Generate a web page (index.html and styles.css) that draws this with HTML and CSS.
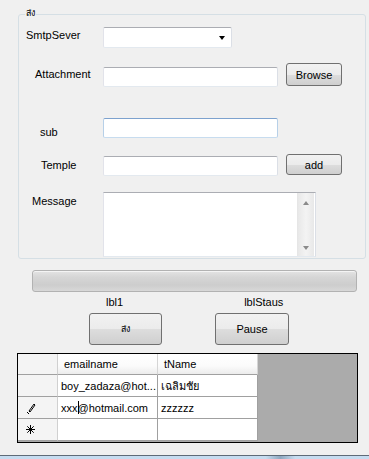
FILE: index.html
```html
<html>
    <head>
        <title>Send mail</title>
        <link rel="stylesheet" href="styles.css">
    </head>
    <body>
        <div class="window">
            <div class="group">
                <span class="group-title">ส่ง</span>
                <div class="row row-smtp">
                    <div class="label-col"><span class="lbl lbl-smtp">SmtpSever</span></div>
                    <div class="combo"><span class="combo-arrow"></span></div>
                </div>
                <div class="row row-attach">
                    <div class="label-col"><span class="lbl lbl-attach">Attachment</span></div>
                    <div class="textbox textbox-attach"></div>
                    <button class="btn btn-side">Browse</button>
                </div>
                <div class="row row-sub">
                    <div class="label-col"><span class="lbl lbl-sub">sub</span></div>
                    <div class="textbox focused"></div>
                </div>
                <div class="row row-temple">
                    <div class="label-col"><span class="lbl lbl-temple">Temple</span></div>
                    <div class="textbox textbox-temple"></div>
                    <button class="btn btn-side btn-add">add</button>
                </div>
                <div class="row row-msg">
                    <div class="label-col"><span class="lbl lbl-msg">Message</span></div>
                    <div class="memo">
                        <div class="memo-text"></div>
                        <div class="vscroll">
                            <span class="arrow-up"></span>
                            <span class="arrow-down"></span>
                        </div>
                    </div>
                </div>
            </div>

            <div class="progress"></div>

            <div class="status-row">
                <span class="lbl1">lbl1</span>
                <span class="lblstatus">lblStaus</span>
            </div>

            <div class="action-row">
                <button class="btn btn-big btn-send">ส่ง</button>
                <button class="btn btn-big btn-pause">Pause</button>
            </div>

            <div class="grid">
                <div class="cell corner"></div>
                <div class="cell colhead">emailname</div>
                <div class="cell colhead">tName</div>

                <div class="cell rowhead"></div>
                <div class="cell">boy_zadaza@hot...</div>
                <div class="cell">เฉลิมชัย</div>

                <div class="cell rowhead">
                    <svg width="10" height="12" viewBox="0 0 10 12">
                        <path d="M3 9 L8 2 L9 3 L4 10 Z" fill="none" stroke="#000" stroke-width="1"/>
                        <rect x="1" y="10" width="1" height="1" fill="#000"/>
                        <rect x="2" y="11" width="1" height="1" fill="#000"/>
                    </svg>
                </div>
                <div class="cell">xxx<span class="caret"></span>@hotmail.com</div>
                <div class="cell">zzzzzz</div>

                <div class="cell rowhead">
                    <svg width="9" height="9" viewBox="0 0 9 9">
                        <path d="M4.5 0 V9 M0 4.5 H9 M1.3 1.3 L7.7 7.7 M7.7 1.3 L1.3 7.7" stroke="#000" stroke-width="1"/>
                    </svg>
                </div>
                <div class="cell"></div>
                <div class="cell"></div>
            </div>

            <div class="taskbar"></div>
        </div>
    </body>
</html>
```
FILE: styles.css
```css
body{
    margin: 0;
    background-color: #f0f0f0;
    font-family: "Liberation Sans", Arial, sans-serif;
    font-size: 11px;
    color: #000;
}
.window{
    width: 369px;
    height: 459px;
    overflow: hidden;
    display: flex;
    flex-direction: column;
}

/* group box */
.group{
    position: relative;
    box-sizing: border-box;
    margin: 14px 0 0 18px;
    width: 348px;
    height: 245px;
    border: 1px solid #d5dfe5;
    border-radius: 3px;
}
.group-title{
    position: absolute;
    top: -8px;
    left: 6px;
    padding: 0 1px;
    font-size: 9px;
    line-height: 13px;
    background-color: #f0f0f0;
}
.row{
    display: flex;
    align-items: flex-start;
}
.label-col{
    width: 84px;
    flex: none;
}
.lbl{
    display: block;
    line-height: 13px;
}
.row-smtp{ margin-top: 12px; height: 21px; }
.row-attach{ margin-top: 15px; height: 23px; }
.row-sub{ margin-top: 32px; height: 20px; }
.row-temple{ margin-top: 16px; height: 21px; }
.row-msg{ margin-top: 17px; height: 65px; }

.lbl-smtp{ margin: 2px 0 0 7px; }
.lbl-attach{ margin: 5px 0 0 16px; }
.lbl-sub{ margin: 8px 0 0 21px; }
.lbl-temple{ margin: 5px 0 0 22px; }
.lbl-msg{ margin: 3px 0 0 13px; }

.textbox, .combo{
    box-sizing: border-box;
    width: 175px;
    height: 20px;
    background-color: #fff;
    border: 1px solid;
    border-color: #abadb3 #dbdfe6 #e3e9ef #e2e3ea;
    border-radius: 2px;
}
.combo{
    width: 129px;
    height: 21px;
    display: flex;
    justify-content: flex-end;
    align-items: center;
    padding-right: 6px;
}
.combo-arrow{
    width: 0;
    height: 0;
    border-left: 3.5px solid transparent;
    border-right: 3.5px solid transparent;
    border-top: 4px solid #000;
    margin-top: 1px;
}
.textbox-attach{ margin-top: 4px; }
.textbox-temple{ margin-top: 2px; }
.focused{
    border-color: #7da2ce #b7d0e8 #c7dcef #b7d0e8;
}

.btn{
    box-sizing: border-box;
    font-family: "Liberation Sans", Arial, sans-serif;
    font-size: 11px;
    color: #000;
    border: 1px solid #707070;
    border-radius: 3px;
    background: linear-gradient(#f2f2f2 0%, #ebebeb 50%, #dddddd 51%, #cfcfcf 100%);
    padding: 0;
}
.btn-side{
    width: 56px;
    height: 23px;
    margin-left: 8px;
}
.btn-add{ height: 21px; }

.memo{
    box-sizing: border-box;
    width: 213px;
    height: 65px;
    background-color: #fff;
    border: 1px solid;
    border-color: #abadb3 #dbdfe6 #e3e9ef #e2e3ea;
    display: flex;
}
.memo-text{
    flex: 1;
}
.vscroll{
    width: 16px;
    margin-right: 1px;
    background: linear-gradient(to right, #e8e8e8, #f3f3f3 50%, #e8e8e8);
    border-left: 1px solid #e6e6e6;
    display: flex;
    flex-direction: column;
    justify-content: space-between;
    align-items: center;
    padding: 8px 0 6px;
}
.arrow-up{
    width: 0;
    height: 0;
    border-left: 3.5px solid transparent;
    border-right: 3.5px solid transparent;
    border-bottom: 4px solid #8a8a8a;
}
.arrow-down{
    width: 0;
    height: 0;
    border-left: 3.5px solid transparent;
    border-right: 3.5px solid transparent;
    border-top: 4px solid #8a8a8a;
}

/* progress */
.progress{
    box-sizing: border-box;
    margin: 11px 0 0 32px;
    width: 325px;
    height: 22px;
    border: 1px solid #b2b2b2;
    border-radius: 3px;
    background: linear-gradient(#e4e4e4 0%, #d6d6d6 30%, #cdcdcd 70%, #d8d8d8 100%);
    box-shadow: inset 0 1px 0 #f4f4f4;
}

.status-row{
    margin-top: 4px;
    height: 13px;
    line-height: 13px;
    display: flex;
}
.lbl1{ margin-left: 106px; }
.lblstatus{ margin-left: 121px; }

.action-row{
    margin-top: 4px;
    display: flex;
}
.btn-big{
    height: 32px;
}
.btn-send{
    margin-left: 89px;
    width: 73px;
    font-size: 9px;
}
.btn-pause{
    margin-left: 53px;
    width: 74px;
}

/* data grid */
.grid{
    box-sizing: border-box;
    margin: 8px 0 0 17px;
    width: 341px;
    height: 90px;
    border: 1px solid #000;
    background-color: #ababab;
    display: grid;
    grid-template-columns: 40px 100px 100px;
    grid-template-rows: 21px 22px 22px 22px;
    align-content: start;
}
.cell{
    box-sizing: border-box;
    background-color: #fff;
    border-right: 1px solid #a0a0a0;
    border-bottom: 1px solid #a0a0a0;
    display: flex;
    align-items: center;
    padding-left: 3px;
    white-space: nowrap;
    overflow: hidden;
}
.corner, .rowhead{
    background-color: #f4f4f4;
    border-color: #d0d0d0;
    border-bottom-color: #a0a0a0;
}
.rowhead{
    padding-left: 8px;
}
.colhead{
    padding-left: 6px;
    background: linear-gradient(#ffffff 0%, #fbfbfb 60%, #ececec 100%);
    border-right-color: #d5d5d5;
    border-bottom-color: #a0a0a0;
}
.caret{
    display: inline-block;
    width: 0;
    height: 13px;
    border-left: 1px solid #000;
    margin: 0 -1px 0 0;
}

.taskbar{
    margin-top: 12px;
    height: 3px;
    border-top: 1px solid #5f6b78;
    background: linear-gradient(to right, #c6dcf0 0%, #c6dcf0 72%, #8ea8c0 76%, #c6dcf0 80%, #c6dcf0 100%);
}
```
